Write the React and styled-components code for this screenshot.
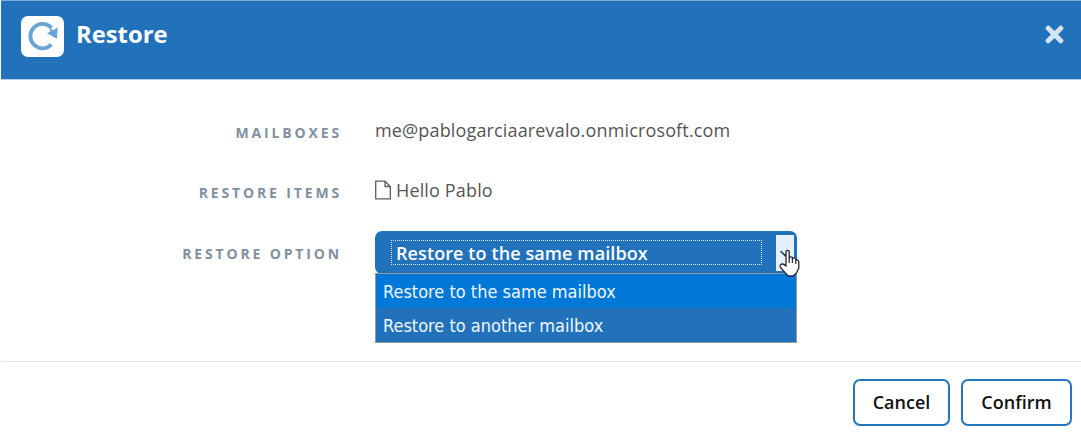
import React from "react";
import styled, { createGlobalStyle } from "styled-components";

const GlobalStyle = createGlobalStyle`
  *, *::before, *::after { box-sizing: border-box; }
  body { margin: 0; background: #fff; font-family: "Open Sans", "Noto Sans", sans-serif; overflow: hidden; }
`;

const Dialog = styled.div`
  width: 1081px;
  height: 435px;
  padding-left: 1px;
  display: flex;
  flex-direction: column;
  background: #fff;
`;

const Header = styled.header`
  height: 80px;
  display: flex;
  align-items: flex-start;
  background: #2272bb;
  border-top: 1px solid #79abd7;
  border-bottom: 1px solid #b5cde4;
  padding: 15px 17px 0 20px;
`;

const Logo = styled.div`
  width: 43px;
  height: 41px;
  border-radius: 7px;
  background: #fff;
  svg { display: block; }
`;

const Title = styled.h1`
  margin: 0 0 0 12px;
  flex: 1;
  font-size: 23.8px;
  font-weight: 700;
  line-height: 37px;
  color: #fff;
`;

const CloseButton = styled.button`
  margin: 9px 0 0;
  padding: 0;
  border: 0;
  background: none;
  width: 19px;
  height: 20px;
  svg { display: block; }
`;

const Body = styled.main`
  height: 281px;
  padding-top: 21px;
`;

const Row = styled.div`
  height: ${(p) => p.$height || "61px"};
  display: grid;
  grid-template-columns: 341px 1fr;
  column-gap: 33px;
  align-items: center;
`;

const Label = styled.div`
  text-align: right;
  font-size: 14px;
  font-weight: 700;
  line-height: 20px;
  letter-spacing: 2.85px;
  padding-top: 3px;
  color: #8190a0;
`;

const Value = styled.div`
  display: flex;
  align-items: center;
  gap: 5px;
  font-size: 18px;
  line-height: 26px;
  letter-spacing: 0.15px;
  color: #555;
  padding-bottom: 3px;
`;

const SelectWrap = styled.div`
  position: relative;
  width: 422px;
  height: 43px;
`;

const SelectBox = styled.div`
  height: 43px;
  border-radius: 7px;
  background: #2272bb;
  display: flex;
  align-items: stretch;
  justify-content: space-between;
  padding: 4px 3px 3px 16px;
`;

const Selected = styled.div`
  margin-top: 5px;
  width: 371px;
  height: 25px;
  padding-left: 4px;
  border: 1px dotted #dbe8f5;
  font-size: 18px;
  font-weight: 600;
  line-height: 25px;
  letter-spacing: 0.1px;
  color: #fff;
`;

const Arrow = styled.div`
  width: 18px;
  background: #e4f0fa;
`;

const Menu = styled.ul`
  position: absolute;
  top: 42px;
  left: 0;
  width: 422px;
  margin: 0;
  padding: 0;
  list-style: none;
  border: 1px solid #93999f;
  background: #2272bb;
`;

const Option = styled.li`
  height: 34px;
  padding-left: 7px;
  font-family: "DejaVu Sans Condensed", "DejaVu Sans", sans-serif;
  font-size: 18px;
  line-height: 36px;
  color: #f0f7fd;
  background: ${(p) => (p.$active ? "#0078d7" : "#2272bb")};
`;

const Cursor = styled.svg`
  position: absolute;
  left: 403px;
  top: 15px;
  z-index: 2;
`;

const Footer = styled.footer`
  flex: 1;
  border-top: 1px solid #e3e3e3;
  display: flex;
  justify-content: flex-end;
  align-items: flex-start;
  gap: 11px;
  padding: 17px 9px 0 0;
`;

const Button = styled.button`
  width: ${(p) => p.$width};
  height: 47px;
  padding: 0 0 2px;
  border: 2px solid #2474bf;
  border-radius: 7px;
  background: #fff;
  color: #111;
  font-family: inherit;
  font-size: 18px;
  font-weight: 600;
`;

export default function App() {
  return (
    <>
      <GlobalStyle />
      <Dialog>
        <Header>
          <Logo>
            <svg width="43" height="41" viewBox="0 0 43 41">
              <path d="M30.3 28.6A12.2 12.2 0 1 1 30.5 11.8" fill="none" stroke="#68a5d6" strokeWidth="3.8" />
              <path d="M36.8 11.5L35.8 22.8L26 17.2Z" fill="#68a5d6" />
              <path d="M28.5 11L33.5 16L29.5 17.5Z" fill="#68a5d6" />
            </svg>
          </Logo>
          <Title>Restore</Title>
          <CloseButton aria-label="Close">
            <svg width="19" height="20" viewBox="0 0 19 20">
              <path d="M3.2 3.2L15.8 15.8M15.8 3.2L3.2 15.8" stroke="#d5e4f3" strokeWidth="5" strokeLinecap="round" />
            </svg>
          </CloseButton>
        </Header>
        <Body>
          <Row $height="60px">
            <Label>MAILBOXES</Label>
            <Value>me@pablogarciaarevalo.onmicrosoft.com</Value>
          </Row>
          <Row>
            <Label>RESTORE ITEMS</Label>
            <Value>
              <svg width="16" height="20" viewBox="0 0 16 20" fill="none" stroke="#5d5d5d" strokeWidth="1.3">
                <path d="M.7 1.2H10L15.3 6.5V18.8H.7ZM10 1.2V6.5H15.3" />
              </svg>
              Hello Pablo
            </Value>
          </Row>
          <Row>
            <Label>RESTORE OPTION</Label>
            <SelectWrap>
              <SelectBox>
                <Selected>Restore to the same mailbox</Selected>
                <Arrow />
              </SelectBox>
              <Menu>
                <Option $active>Restore to the same mailbox</Option>
                <Option>Restore to another mailbox</Option>
              </Menu>
              <Cursor width="24" height="32" viewBox="0 0 24 32">
                <path d="M2.5 5L7 9.5L11 5" fill="none" stroke="#26394c" strokeWidth="1.6" />
                <path
                  d="M8 20V6.2Q8 4.3 9.6 4.3T11.2 6.2V12Q12.2 10.2 14.4 11.5V12.5Q16.4 11 17.8 13V14Q20.5 13.4 20.8 16V22L18.5 27L15 30H10.5L7.3 27L2.3 21Q1.6 18.6 4 18Q5.6 17.8 8 20Z"
                  fill="#fff" stroke="#25253a" strokeWidth="1.3" strokeLinejoin="round"
                />
                <path d="M11.2 12V17M14.4 12.5V17M17.8 14V18" stroke="#25253a" strokeWidth="1.2" />
              </Cursor>
            </SelectWrap>
          </Row>
        </Body>
        <Footer>
          <Button $width="97px">Cancel</Button>
          <Button $width="111px">Confirm</Button>
        </Footer>
      </Dialog>
    </>
  );
}
